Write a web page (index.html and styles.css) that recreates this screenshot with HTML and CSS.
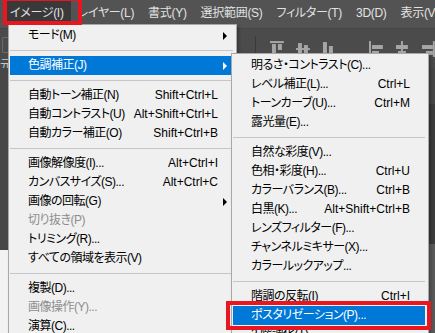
FILE: index.html
```html
<!DOCTYPE html>
<html>
	<head>
		<meta charset="utf-8">
		<title>イメージメニュー</title>
		<link rel="stylesheet" href="styles.css">
	</head>
	<body>
		<div class="screen">
			<nav class="menubar">
				<span class="bar-item open">イメージ(I)</span>
				<span class="bar-item">レイヤー(L)</span>
				<span class="bar-item">書式(Y)</span>
				<span class="bar-item">選択範囲(S)</span>
				<span class="bar-item">フィルター(T)</span>
				<span class="bar-item">3D(D)</span>
				<span class="bar-item">表示(V)</span>
			</nav>
			<div class="optionbar">
				<div class="preset">
					<span class="preset-box"></span>
					<span class="preset-text">復元</span>
				</div>
				<i class="divider"></i>
				<svg class="icon" width="14" height="16" viewBox="0 0 14 16"><rect x="0" y="0" width="14" height="2"/><rect x="2" y="3" width="4" height="10"/><rect x="8" y="3" width="4" height="6"/></svg>
				<svg class="icon" width="14" height="16" viewBox="0 0 14 16"><rect x="0" y="7" width="14" height="2"/><rect x="2" y="2" width="4" height="12"/><rect x="8" y="4" width="4" height="8"/></svg>
				<svg class="icon" width="14" height="16" viewBox="0 0 14 16"><rect x="0" y="14" width="14" height="2"/><rect x="1" y="1" width="4" height="12"/><rect x="7" y="5" width="4" height="8"/></svg>
				<i class="gap"></i>
				<svg class="icon" width="14" height="16" viewBox="0 0 14 16"><rect x="0" y="0" width="2" height="16"/><rect x="3" y="4" width="11" height="4"/><rect x="3" y="10" width="7" height="4"/></svg>
				<svg class="icon" width="14" height="16" viewBox="0 0 14 16"><rect x="6" y="0" width="2" height="16"/><rect x="1" y="4" width="12" height="4"/><rect x="3" y="10" width="8" height="4"/></svg>
				<svg class="icon" width="14" height="16" viewBox="0 0 14 16"><rect x="12" y="0" width="2" height="16"/><rect x="1" y="4" width="11" height="4"/><rect x="5" y="10" width="7" height="4"/></svg>
			</div>
			<div class="workspace">
				<div class="dock">
					<div class="dock-panel"></div>
					<div class="dock-doc"></div>
				</div>
				<div class="canvas-area"></div>
				<div class="panels">
					<div class="panel-head"></div>
					<div class="panel-body"></div>
					<div class="panel-low"></div>
				</div>
			</div>

			<div class="menu main-menu">
				<div class="item"><span class="label">モード(M)</span><span class="key"></span><span class="sub"><i class="arrow"></i></span></div>
				<div class="sep"></div>
				<div class="item hot"><span class="label">色調補正(J)</span><span class="key"></span><span class="sub"><i class="arrow"></i></span></div>
				<div class="sep"></div>
				<div class="item"><span class="label">自動トーン補正(N)</span><span class="key">Shift+Ctrl+L</span><span class="sub"></span></div>
				<div class="item"><span class="label">自動コントラスト(U)</span><span class="key">Alt+Shift+Ctrl+L</span><span class="sub"></span></div>
				<div class="item"><span class="label">自動カラー補正(O)</span><span class="key">Shift+Ctrl+B</span><span class="sub"></span></div>
				<div class="sep"></div>
				<div class="item"><span class="label">画像解像度(I)...</span><span class="key">Alt+Ctrl+I</span><span class="sub"></span></div>
				<div class="item"><span class="label">カンバスサイズ(S)...</span><span class="key">Alt+Ctrl+C</span><span class="sub"></span></div>
				<div class="item"><span class="label">画像の回転(G)</span><span class="key"></span><span class="sub"><i class="arrow"></i></span></div>
				<div class="item off"><span class="label">切り抜き(P)</span><span class="key"></span><span class="sub"></span></div>
				<div class="item"><span class="label">トリミング(R)...</span><span class="key"></span><span class="sub"></span></div>
				<div class="item"><span class="label">すべての領域を表示(V)</span><span class="key"></span><span class="sub"></span></div>
				<div class="sep"></div>
				<div class="item"><span class="label">複製(D)...</span><span class="key"></span><span class="sub"></span></div>
				<div class="item off"><span class="label">画像操作(Y)...</span><span class="key"></span><span class="sub"></span></div>
				<div class="item"><span class="label">演算(C)...</span><span class="key"></span><span class="sub"></span></div>
			</div>

			<div class="menu sub-menu">
				<div class="item"><span class="label">明るさ・コントラスト(C)...</span><span class="key"></span><span class="sub"></span></div>
				<div class="item"><span class="label">レベル補正(L)...</span><span class="key">Ctrl+L</span><span class="sub"></span></div>
				<div class="item"><span class="label">トーンカーブ(U)...</span><span class="key">Ctrl+M</span><span class="sub"></span></div>
				<div class="item"><span class="label">露光量(E)...</span><span class="key"></span><span class="sub"></span></div>
				<div class="sep"></div>
				<div class="item"><span class="label">自然な彩度(V)...</span><span class="key"></span><span class="sub"></span></div>
				<div class="item"><span class="label">色相・彩度(H)...</span><span class="key">Ctrl+U</span><span class="sub"></span></div>
				<div class="item"><span class="label">カラーバランス(B)...</span><span class="key">Ctrl+B</span><span class="sub"></span></div>
				<div class="item"><span class="label">白黒(K)...</span><span class="key">Alt+Shift+Ctrl+B</span><span class="sub"></span></div>
				<div class="item"><span class="label">レンズフィルター(F)...</span><span class="key"></span><span class="sub"></span></div>
				<div class="item"><span class="label">チャンネルミキサー(X)...</span><span class="key"></span><span class="sub"></span></div>
				<div class="item"><span class="label">カラールックアップ...</span><span class="key"></span><span class="sub"></span></div>
				<div class="sep"></div>
				<div class="item"><span class="label">階調の反転(I)</span><span class="key">Ctrl+I</span><span class="sub"></span></div>
				<div class="item hot"><span class="label">ポスタリゼーション(P)...</span><span class="key"></span><span class="sub"></span></div>
				<div class="item"><span class="label">2 階調化(T)...</span><span class="key"></span><span class="sub"></span></div>
			</div>

			<div class="mark mark-bar"></div>
			<div class="mark mark-item"></div>
		</div>
	</body>
</html>
```
FILE: styles.css
```css
* {
	box-sizing: border-box;
}

body {
	margin: 0;
	background: #535353;
	font-family: "Liberation Sans", "Noto Sans CJK JP", sans-serif;
	font-size: 12px;
	font-feature-settings: "palt";
}

.screen {
	width: 435px;
	height: 333px;
	position: relative;
	overflow: hidden;
	display: flex;
	flex-direction: column;
}

/* menu bar */
.menubar {
	height: 28px;
	flex: none;
	display: flex;
	padding-left: 3px;
	background: #535353;
	color: #e2e2e2;
	white-space: nowrap;
	letter-spacing: -0.3px;
}

.bar-item {
	height: 24px;
	padding: 3px 7px 0;
	line-height: 21px;
}

.bar-item.open {
	background: #393939;
}

/* options bar */
.optionbar {
	height: 40px;
	flex: none;
	display: flex;
	align-items: flex-start;
	gap: 12px;
	padding-top: 12px;
	background: #4b4b4b;
	border-top: 1px solid #454545;
}

.preset {
	width: 8px;
	margin: -4px 235px 0 0;
	overflow: hidden;
	white-space: nowrap;
}

.preset-box {
	display: block;
	width: 6px;
	height: 16px;
	margin-left: 2px;
	border: 1px solid #6a6a6a;
	border-right: 0;
	border-radius: 2px 0 0 2px;
}

.preset-text {
	display: block;
	margin: 2px 0 0 -12px;
	color: #c8c8c8;
}

.divider {
	width: 1px;
	height: 20px;
	margin: -5px 2px 0 0;
	background: #3a3a3a;
}

.gap {
	width: 10px;
}

.icon {
	fill: #a6a6a6;
}

/* workspace behind the menus */
.workspace {
	flex: 1;
	display: flex;
}

.dock {
	width: 8px;
	display: flex;
	flex-direction: column;
}

.dock-panel {
	height: 182px;
	background: #474747;
}

.dock-doc {
	flex: 1;
	background: #f2f2f2;
}

.canvas-area {
	flex: 1;
	background: #3c3c3c;
}

.panels {
	width: 6px;
	display: flex;
	flex-direction: column;
}

.panel-head {
	height: 36px;
	background: #474747;
}

.panel-body {
	height: 140px;
	background: #3c3c3c;
}

.panel-low {
	flex: 1;
	background: #595959;
}

/* dropdown menus */
.menu {
	position: absolute;
	background: #f0f0f0;
	border: 1px solid #a8a8a8;
	color: #000;
	box-shadow: 2px 2px 3px rgba(0, 0, 0, 0.25);
}

.main-menu {
	left: 8px;
	top: 24px;
	width: 229px;
	height: 330px;
	padding-top: 1px;
}

.sub-menu {
	left: 231px;
	top: 53px;
	width: 198px;
	height: 300px;
	padding-top: 2px;
}

.item {
	height: 19px;
	margin: 0 3px 0 1px;
	padding-left: 18px;
	display: flex;
	align-items: center;
	line-height: 19px;
	white-space: nowrap;
}

.item .label {
	flex: 1;
	letter-spacing: -0.5px;
}

.item .sub {
	width: 15px;
	height: 19px;
	display: flex;
	align-items: center;
	padding-left: 5px;
}

.arrow {
	width: 0;
	height: 0;
	border-left: 4px solid #000;
	border-top: 4px solid transparent;
	border-bottom: 4px solid transparent;
}

.item.hot {
	background: #0078d7;
	color: #fff;
}

.item.hot .arrow {
	border-left-color: #fff;
}

.item.off {
	color: #8d8d8d;
}

.sep {
	height: 11px;
	margin: 0 3px 0 1px;
	display: flex;
	align-items: center;
}

.sep::before {
	content: "";
	flex: 1;
	border-top: 1px solid #c6c6c6;
}

/* red annotation boxes */
.mark {
	position: absolute;
	border: 4px solid #e9151f;
}

.mark-bar {
	left: 3px;
	top: -3px;
	width: 79px;
	height: 28px;
}

.mark-item {
	left: 226px;
	top: 301px;
	width: 205px;
	height: 29px;
}
```
